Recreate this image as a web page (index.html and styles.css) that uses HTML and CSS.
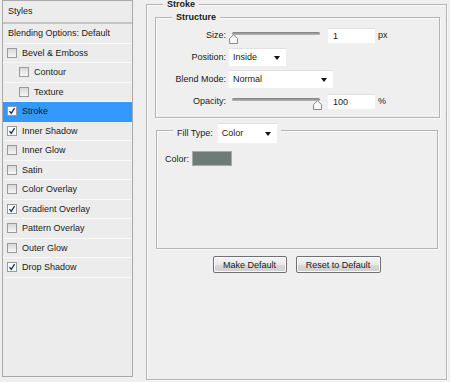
FILE: index.html
```html
<!DOCTYPE html>
<html lang="en">
<head>
  <meta charset="UTF-8">
  <title>Layer Style - Stroke</title>
  <link rel="stylesheet" href="styles.css">
</head>
<body>
  <div class="dialog">

    <div class="styles-list">
      <div class="styles-head">Styles</div>
      <div class="row">Blending Options: Default</div>
      <div class="row"><span class="cb"></span>Bevel &amp; Emboss</div>
      <div class="row sub"><span class="cb"></span>Contour</div>
      <div class="row sub"><span class="cb"></span>Texture</div>
      <div class="row selected"><span class="cb on"><svg viewBox="0 0 8 8"><path d="M1.5 4.2 L3.2 6.3 L6.6 1.2"/></svg></span>Stroke</div>
      <div class="row"><span class="cb on"><svg viewBox="0 0 8 8"><path d="M1.5 4.2 L3.2 6.3 L6.6 1.2"/></svg></span>Inner Shadow</div>
      <div class="row"><span class="cb"></span>Inner Glow</div>
      <div class="row"><span class="cb"></span>Satin</div>
      <div class="row"><span class="cb"></span>Color Overlay</div>
      <div class="row"><span class="cb on"><svg viewBox="0 0 8 8"><path d="M1.5 4.2 L3.2 6.3 L6.6 1.2"/></svg></span>Gradient Overlay</div>
      <div class="row"><span class="cb"></span>Pattern Overlay</div>
      <div class="row"><span class="cb"></span>Outer Glow</div>
      <div class="row"><span class="cb on"><svg viewBox="0 0 8 8"><path d="M1.5 4.2 L3.2 6.3 L6.6 1.2"/></svg></span>Drop Shadow</div>
    </div>

    <div class="group stroke-group">
      <div class="legend">Stroke</div>

      <div class="group structure">
        <div class="legend">Structure</div>
        <div class="fields">
          <label>Size:</label>
          <div class="ctrl">
            <div class="slider">
              <div class="track"></div>
              <svg class="thumb" viewBox="0 0 9 10"><path d="M0.5 9.5 V4.5 L4.5 0.8 L8.5 4.5 V9.5 Z"/></svg>
            </div>
            <div class="num">1</div>
            <span class="unit">px</span>
          </div>

          <label>Position:</label>
          <div class="ctrl">
            <div class="select pos">Inside<span class="arrow"></span></div>
          </div>

          <label>Blend Mode:</label>
          <div class="ctrl">
            <div class="select blend">Normal<span class="arrow"></span></div>
          </div>

          <label>Opacity:</label>
          <div class="ctrl">
            <div class="slider">
              <div class="track"></div>
              <svg class="thumb end" viewBox="0 0 9 10"><path d="M0.5 9.5 V4.5 L4.5 0.8 L8.5 4.5 V9.5 Z"/></svg>
            </div>
            <div class="num">100</div>
            <span class="unit">%</span>
          </div>
        </div>
      </div>

      <div class="group fill">
        <div class="legend fill-legend">
          <span>Fill Type:</span>
          <div class="select filltype">Color<span class="arrow"></span></div>
        </div>
        <div class="color-row">
          <span>Color:</span>
          <span class="swatch"></span>
        </div>
      </div>

      <div class="buttons">
        <button class="btn make">Make Default</button>
        <button class="btn reset">Reset to Default</button>
      </div>
    </div>

  </div>
</body>
</html>
```

FILE: styles.css
```css
body {
  margin: 0;
  background: #efefef;
  font-family: "Liberation Sans", Arial, sans-serif;
  font-size: 9px;
  color: #1a1a1a;
}
.dialog {
  display: flex;
  align-items: flex-start;
  padding-left: 2px;
  width: 450px;
  height: 382px;
  box-sizing: border-box;
}

/* left list */
.styles-list {
  width: 131px;
  height: 377px;
  box-sizing: border-box;
  border: 1px solid #a9a9a9;
  background: #ececec;
}
.styles-head {
  height: 21px;
  line-height: 21px;
  padding-left: 5px;
  border-bottom: 2px solid #c4c4c4;
}
.row {
  display: flex;
  align-items: center;
  height: 19.5px;
  box-sizing: border-box;
  padding-left: 5px;
  border-bottom: 1px solid #f8f8f8;
  white-space: nowrap;
}
.row .cb {
  margin-left: -1px;
}
.row.sub {
  padding-left: 17px;
}
.row.selected {
  background: #3399ff;
  border-bottom-color: #3399ff;
}
.cb {
  width: 10px;
  height: 10px;
  box-sizing: border-box;
  border: 1px solid #9a9a9a;
  background: linear-gradient(#d8d8d8, #f6f6f6);
  margin-right: 5px;
  flex: none;
  display: flex;
}
.cb.on {
  background: #fbfbfb;
}
.cb svg {
  width: 8px;
  height: 8px;
}
.cb path {
  fill: none;
  stroke: #1c2a6b;
  stroke-width: 1.3;
}

/* group boxes */
.group {
  display: flex;
  flex-direction: column;
  box-sizing: border-box;
  border: 1px solid #b4b4b4;
  box-shadow: inset 1px 1px 0 #fafafa, 1px 1px 0 #fafafa;
}
.legend {
  align-self: flex-start;
  background: #efefef;
  padding: 0 4px;
  font-weight: bold;
  line-height: 11px;
}
.stroke-group {
  margin-left: 13px;
  margin-top: 4px;
  width: 301px;
  height: 376px;
}
.stroke-group > .legend {
  margin-top: -6px;
  margin-left: 16px;
}
.structure {
  margin: 7px 6px 0 8px;
  height: 101px;
}
.structure > .legend {
  margin-top: -6px;
  margin-left: 16px;
}
.fields {
  display: grid;
  grid-template-columns: 70px auto;
  grid-auto-rows: 22px;
  column-gap: 3px;
  margin-top: 1px;
}
.fields label {
  text-align: right;
  align-self: center;
}
.ctrl {
  display: flex;
  align-items: center;
}
.slider {
  position: relative;
  width: 91px;
  height: 11px;
  margin-top: 4px;
}
.track {
  margin: 0 0 0 3px;
  height: 3px;
  border-radius: 2px;
  background: linear-gradient(#7d7d7d, #b9b9b9);
}
.thumb {
  position: absolute;
  left: 0;
  top: 2px;
  width: 9px;
  height: 10px;
}
.thumb.end {
  left: auto;
  right: -2px;
}
.thumb path {
  fill: #f7f7f7;
  stroke: #8a8a8a;
  stroke-width: 1;
}
.num {
  width: 47px;
  height: 15px;
  box-sizing: border-box;
  background: #fff;
  border-top: 1px solid #e2e2e2;
  margin-left: 8px;
  padding-left: 5px;
  line-height: 14px;
}
.unit {
  margin-left: 3px;
}
.select {
  position: relative;
  background: #fff;
  height: 18px;
  box-sizing: border-box;
  border-top: 1px solid #e0e0e0;
  line-height: 17px;
  padding-left: 4px;
  font-weight: normal;
}
.arrow {
  position: absolute;
  right: 6px;
  top: 7px;
  border-left: 3.5px solid transparent;
  border-right: 3.5px solid transparent;
  border-top: 4px solid #111;
}
.select.pos {
  width: 57px;
}
.select.blend {
  width: 104px;
}

/* fill box */
.fill {
  margin: 12px 8px 0 9px;
  height: 119px;
}
.fill-legend {
  margin-top: -8px;
  margin-left: 16px;
  display: flex;
  align-items: center;
  font-weight: normal;
  line-height: 20px;
}
.select.filltype {
  width: 59px;
  height: 20px;
  line-height: 19px;
  margin-left: 5px;
}
.select.filltype .arrow {
  top: 8px;
}
.color-row {
  display: flex;
  align-items: center;
  margin: 9px 0 0 8px;
}
.swatch {
  width: 38px;
  height: 13px;
  margin-left: 4px;
  background: #6e7c77;
  box-shadow: 0 0 0 1px #a6aca9;
}

/* buttons */
.buttons {
  display: flex;
  justify-content: center;
  gap: 9px;
  margin-top: 7px;
}
.btn {
  height: 17px;
  padding: 0;
  font-family: "Liberation Sans", Arial, sans-serif;
  font-size: 9px;
  color: #1a1a1a;
  border: 1px solid #707070;
  border-radius: 2px;
  background: linear-gradient(#f4f4f4 0%, #e9e9e9 50%, #d9d9d9 51%, #cfcfcf 100%);
  box-shadow: inset 0 0 0 1px #fbfbfb;
}
.btn.make {
  width: 74px;
}
.btn.reset {
  width: 85px;
}
```
